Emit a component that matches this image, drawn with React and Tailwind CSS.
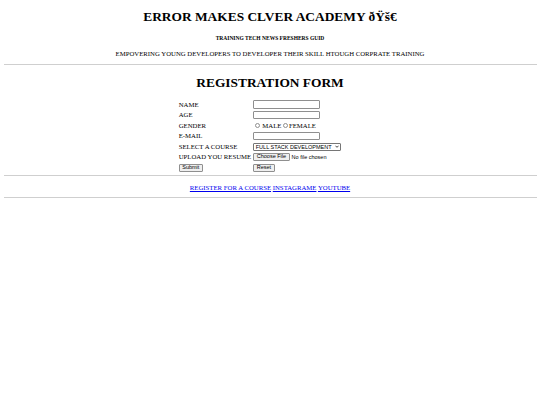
export default function App() {
  return (
    <div className="min-h-screen bg-white px-[3.5px] text-black text-[6.75px] leading-[8px] font-['Liberation_Serif',serif]">
      <h1 className="pt-[9px] text-center text-[13.4px] leading-[16px] font-bold">
        ERROR MAKES CLVER ACADEMY ðŸš€
      </h1>
      <h6 className="mt-[10px] text-center text-[5.5px] leading-[6px] font-bold">
        TRAINING TECH NEWS FRESHERS GUID
      </h6>
      <p className="mt-[9px] text-center">
        EMPOVERING YOUNG DEVELOPERS TO DEVELOPER THEIR SKILL HTOUGH CORPRATE TRAINING
      </p>
      <hr className="mt-[6px] border-t border-[#cfcfcf]" />

      <h1 className="mt-[10px] text-center text-[13.4px] leading-[16px] font-bold">
        REGISTRATION FORM
      </h1>

      <div className="mt-[9px] flex justify-center">
        <div className="grid grid-cols-[auto_110px] gap-x-[1px] gap-y-[1.5px]">
          <Label>NAME</Label>
          <Cell><TextBox /></Cell>
          <Label>AGE</Label>
          <Cell><TextBox /></Cell>
          <Label>GENDER</Label>
          <Cell>
            <div className="flex items-center">
              <Radio className="ml-[2px]" />
              <span className="ml-[2.5px]">MALE</span>
              <Radio className="ml-[2px]" />
              <span className="ml-[1px]">FEMALE</span>
            </div>
          </Cell>
          <Label>E-MAIL</Label>
          <Cell><TextBox /></Cell>
          <Label>SELECT A COURSE</Label>
          <Cell>
            <div className="flex h-[8px] w-[88px] items-center justify-between rounded-[1px] border-[0.5px] border-[#767676] px-[1.5px] font-['Liberation_Sans',Arial,sans-serif] text-[5.5px]">
              <span>FULL STACK DEVELOPMENT</span>
              <svg viewBox="0 0 10 6" className="h-[3px] w-[4px]">
                <path d="M1 1 L5 5 L9 1" fill="none" stroke="black" strokeWidth="1.8" />
              </svg>
            </div>
          </Cell>
          <Label>UPLOAD YOU RESUME</Label>
          <Cell>
            <div className="flex items-center font-['Liberation_Sans',Arial,sans-serif] text-[5.5px]">
              <Button>Choose File</Button>
              <span className="ml-[2px]">No file chosen</span>
            </div>
          </Cell>
          <Cell><Button>Submit</Button></Cell>
          <Cell><Button>Reset</Button></Cell>
        </div>
      </div>

      <hr className="mt-[3px] border-t border-[#cfcfcf]" />
      <div className="mt-[8px] text-center">
        <a href="#" className="text-[#0000ee] underline">REGISTER FOR A COURSE</a>{' '}
        <a href="#" className="text-[#0000ee] underline">INSTAGRAME</a>{' '}
        <a href="#" className="text-[#0000ee] underline">YOUTUBE</a>
      </div>
      <hr className="mt-[5px] border-t border-[#cfcfcf]" />
    </div>
  )
}

function Label({ children }) {
  return <div className="flex h-[9px] items-center whitespace-nowrap pl-[1px]">{children}</div>
}

function Cell({ children }) {
  return <div className="flex h-[9px] items-center pl-[1px]">{children}</div>
}

function TextBox() {
  return <div className="h-[8.5px] w-[67px] rounded-[1px] border-[0.5px] border-[#8f8f8f] bg-white" />
}

function Radio({ className }) {
  return (
    <span
      className={`inline-block h-[4.5px] w-[4.5px] rounded-full border-[0.5px] border-[#8f8f8f] bg-white ${className}`}
    />
  )
}

function Button({ children }) {
  return (
    <span className="inline-flex h-[8px] items-center rounded-[1px] border-[0.5px] border-[#8f8f8f] bg-[#efefef] px-[2.5px] font-['Liberation_Sans',Arial,sans-serif] text-[5.5px] leading-none">
      {children}
    </span>
  )
}
